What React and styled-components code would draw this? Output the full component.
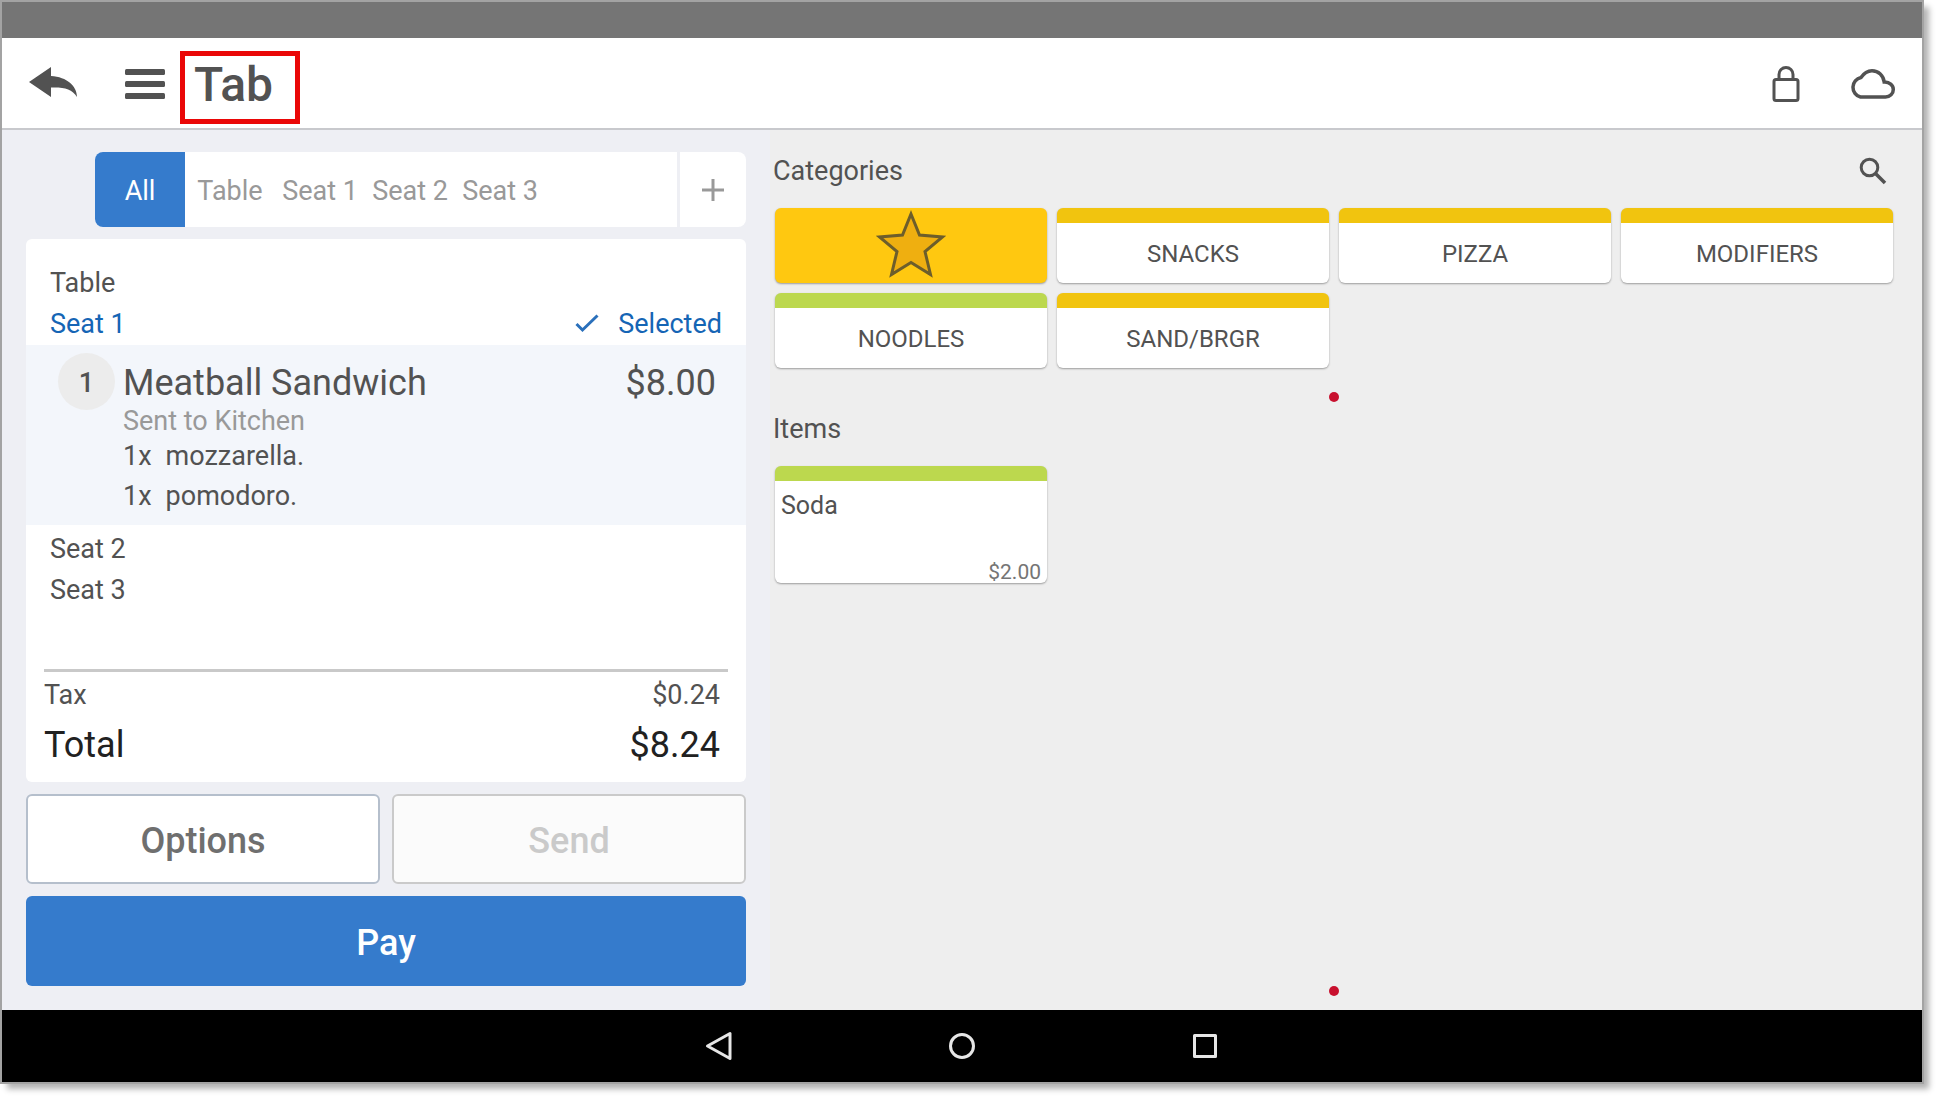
import React, { useState } from "react";
import styled, { createGlobalStyle } from "styled-components";

const GlobalStyle = createGlobalStyle`
  * {
    box-sizing: border-box;
  }

  body {
    margin: 0;
    background: #fff;
    color: #525252;
    font-family: Roboto, "Liberation Sans", sans-serif;
    font-size: 27px;
  }

  button {
    border: none;
    padding: 0;
    background: none;
    color: inherit;
    font: inherit;
    cursor: pointer;
  }

  h1, h2, p, ul, dl, dd {
    margin: 0;
    padding: 0;
    font-weight: 400;
    list-style: none;
  }

  svg {
    display: block;
  }
`;

const Device = styled.div`
  display: flex;
  flex-direction: column;
  min-height: calc(100vh - 15px);
  margin: 0 15px 15px 0;
  border: 2px solid #a3a3a3;
  box-shadow: 6px 6px 6px -1px rgba(0, 0, 0, .3);
`;

const StatusBar = styled.div`
  height: 36px;
  background: #757575;
`;

const Header = styled.header`
  display: flex;
  align-items: center;
  height: 92px;
  padding: 2px 26px 0 25px;
  border-bottom: 2px solid #c8c9cd;
  background: #fff;
`;

const IconButton = styled.button`
  display: flex;
  align-items: center;
  justify-content: center;
  margin-right: ${({ $after }) => $after || 0}px;
`;

const Title = styled.h1`
  margin-top: 6px;
  padding: 0 22px 5px 9px;
  border: 5px solid #ea0707;
  font-size: 48px;
  font-weight: 500;
  line-height: 58px;
`;

const HeaderActions = styled.div`
  display: flex;
  align-items: center;
  gap: 46px;
  margin-left: auto;
`;

const Main = styled.main`
  display: grid;
  grid-template-columns: 2fr 3fr;
  flex: 1;
`;

const OrderPane = styled.section`
  display: flex;
  flex-direction: column;
  gap: 12px;
  padding: 22px 24px 24px;
  background: #eeeff4;
`;

const SeatBar = styled.div`
  display: flex;
  height: 75px;
  margin-left: 69px;
  border-radius: 8px;
  overflow: hidden;
`;

const SeatTabs = styled.div`
  display: flex;
  flex: 1;
  background: #fff;
`;

const SeatTab = styled.button`
  width: 90px;
  padding-top: 2px;
  background: ${({ $active }) => ($active ? "#357bcc" : "#fff")};
  color: ${({ $active }) => ($active ? "#fff" : "#999")};
`;

const AddSeat = styled.button`
  display: flex;
  align-items: center;
  justify-content: center;
  width: 66px;
  margin-left: 3px;
  background: #fff;
`;

const Ticket = styled.div`
  display: flex;
  flex-direction: column;
  flex: 1;
  padding: 24px 0 10px;
  border-radius: 6px;
  background: #fff;
`;

const SeatLine = styled.div`
  display: flex;
  align-items: center;
  justify-content: space-between;
  padding: 0 24px;
  line-height: 41px;
  color: ${({ $selected }) => ($selected ? "#1565b5" : "inherit")};
`;

const Selected = styled.span`
  display: flex;
  align-items: center;
  gap: 19px;
`;

const OrderItem = styled.div`
  display: flex;
  align-items: flex-start;
  margin-bottom: 4px;
  padding: 8px 30px 9px 32px;
  background: #f3f6fb;
`;

const Quantity = styled.span`
  flex-shrink: 0;
  width: 57px;
  margin-right: 8px;
  padding-top: 3px;
  border-radius: 50%;
  background: #ececec;
  font-weight: 500;
  line-height: 54px;
  text-align: center;
`;

const ItemDetails = styled.div`
  flex: 1;
  padding-top: 7px;
`;

const ItemHead = styled.div`
  display: flex;
  justify-content: space-between;
  font-size: 36px;
  line-height: 46px;
`;

const ItemStatus = styled.p`
  color: #999;
  line-height: 30px;
`;

const Modifier = styled.li`
  display: flex;
  gap: 14px;
  line-height: 40px;
`;

const Totals = styled.dl`
  margin: auto 18px 0;
  border-top: 3px solid #c9c9c9;
`;

const TotalLine = styled.div`
  display: flex;
  justify-content: space-between;
  padding-right: 8px;
  font-size: ${({ $grand }) => ($grand ? 36 : 27)}px;
  line-height: ${({ $grand }) => ($grand ? 54 : 46)}px;
  color: ${({ $grand }) => ($grand ? "#212121" : "inherit")};
`;

const ActionRow = styled.div`
  display: grid;
  grid-template-columns: 1fr 1fr;
  gap: 12px;
`;

const ActionButton = styled.button`
  height: 90px;
  padding-top: 4px;
  border: 2px solid #b5bfcc;
  border-radius: 6px;
  background: #fff;
  color: #6f6f6f;
  font-size: 36px;
  font-weight: 500;

  &:disabled {
    border-color: #cacaca;
    background: #fbfbfb;
    color: #cacaca;
    cursor: default;
  }
`;

const PayButton = styled(ActionButton)`
  border: none;
  background: #357bcc;
  color: #fff;
`;

const MenuPane = styled.section`
  display: flex;
  flex-direction: column;
  padding: 0 29px 14px 3px;
  background: #eee;
`;

const PaneHeading = styled.div`
  display: flex;
  align-items: center;
  justify-content: space-between;
  height: 78px;
  padding: 3px 6px 0 0;
`;

const ItemsHeading = styled.h2`
  padding-bottom: 10px;
  font-size: 27px;
  line-height: 54px;
`;

const PaneTitle = styled.h2`
  font-size: 27px;
`;

const TileGrid = styled.div`
  display: grid;
  grid-template-columns: repeat(4, 1fr);
  gap: 10px;
  margin-left: 2px;
`;

const Tile = styled.button`
  height: 75px;
  padding-top: 2px;
  border-top: 15px solid ${({ $color }) => $color};
  border-radius: 6px;
  background: #fff;
  box-shadow: 0 1px 2px rgba(0, 0, 0, .35);
  font-size: 24px;
`;

const FavoritesTile = styled(Tile)`
  display: flex;
  justify-content: center;
  padding-top: 0;
  border-top: none;
  background: #ffc810;
`;

const ItemTile = styled(Tile)`
  display: flex;
  flex-direction: column;
  align-items: flex-start;
  justify-content: space-between;
  height: 117px;
  padding: 9px 6px 0;
  font-size: 25px;
  line-height: 32px;
`;

const Price = styled.span`
  align-self: flex-end;
  color: #757575;
  font-size: 21px;
  line-height: 22px;
`;

const PageDot = styled.span`
  align-self: center;
  width: 10px;
  height: 10px;
  margin-top: ${({ $bottom }) => ($bottom ? "auto" : "24px")};
  margin-left: 2px;
  border-radius: 50%;
  background: #c8102e;
`;

const NavBar = styled.nav`
  display: flex;
  align-items: center;
  justify-content: center;
  gap: 213px;
  height: 72px;
  background: #000;
`;

const BackIcon = () => (
  <svg width="52" height="34" viewBox="0 2 52 34" fill="#525252">
    <path d="M2 17 24 2v9c16 1 26 10 26 21-5-8-13-10-26-9.500V32Z" />
  </svg>
);

const MenuIcon = () => (
  <svg width="40" height="30" viewBox="0 0 40 30" fill="#525252">
    <rect width="40" height="6" rx="1.500" />
    <rect y="12" width="40" height="6" rx="1.500" />
    <rect y="24" width="40" height="6" rx="1.500" />
  </svg>
);

const LockIcon = () => (
  <svg width="32" height="38" viewBox="0 0 32 38" fill="none" stroke="#525252" strokeWidth="3">
    <rect x="4" y="14.500" width="24" height="21" rx="2" />
    <path d="M9 14V9.500a7 7 0 0 1 14 0V14" />
  </svg>
);

const CloudIcon = () => (
  <svg width="48" height="32" viewBox="0 0 48 32" fill="none" stroke="#525252" strokeWidth="3.500">
    <path d="M12.500 29A10 10 0 0 1 13 9.500C16 5 20 2.700 24 2.700 30.500 2.700 35.500 7.500 36.200 14 41.500 13.700 45.300 17.300 45.300 21.500 45.300 25.700 42 29 37.500 29Z" />
  </svg>
);

const SearchIcon = () => (
  <svg width="28" height="28" viewBox="0 0 28 28" fill="none" stroke="#525252" strokeWidth="3">
    <circle cx="10.500" cy="10.500" r="8.300" />
    <path d="m16.500 16.500 9.500 9.500" strokeWidth="3.500" />
  </svg>
);

const PlusIcon = () => (
  <svg width="22" height="22" viewBox="0 0 22 22" stroke="#999" strokeWidth="3">
    <path d="M0 11h22M11 0v22" />
  </svg>
);

const CheckIcon = () => (
  <svg width="24" height="22" viewBox="0 0 24 22" fill="none" stroke="#2a70bb" strokeWidth="3">
    <path d="m1.500 10 6 6L22.500 1.500" />
  </svg>
);

const StarIcon = () => (
  <svg width="72" height="72" viewBox="0 0 72 72" fill="#efaf10" stroke="#6d5e2b" strokeWidth="3">
    <path d="m36 6 8.500 21L67.500 29 50 43.500 55.500 66.500 36 54.500 16.500 66.500 22 43.500 4.500 29 27.500 27Z" />
  </svg>
);

const NavIcon = ({ children }) => (
  <svg width="30" height="30" viewBox="0 0 30 30" fill="none" stroke="#e6e6e6" strokeWidth="3" strokeLinejoin="round">
    {children}
  </svg>
);

const seats = ["All", "Table", "Seat 1", "Seat 2", "Seat 3"];

const categories = [
  { name: "SNACKS", color: "#f1c40f" },
  { name: "PIZZA", color: "#f1c40f" },
  { name: "MODIFIERS", color: "#f1c40f" },
  { name: "NOODLES", color: "#bcd84e" },
  { name: "SAND/BRGR", color: "#f1c40f" },
];

const modifiers = ["mozzarella.", "pomodoro."];

const Order = () => {
  const [activeSeat, setActiveSeat] = useState("All");

  return (
    <OrderPane>
      <SeatBar>
        <SeatTabs>
          {seats.map((seat) => (
            <SeatTab key={seat} $active={seat === activeSeat} onClick={() => setActiveSeat(seat)}>
              {seat}
            </SeatTab>
          ))}
        </SeatTabs>
        <AddSeat aria-label="Add seat"><PlusIcon /></AddSeat>
      </SeatBar>

      <Ticket>
        <SeatLine>Table</SeatLine>
        <SeatLine $selected>
          Seat 1
          <Selected><CheckIcon />Selected</Selected>
        </SeatLine>
        <OrderItem>
          <Quantity>1</Quantity>
          <ItemDetails>
            <ItemHead>
              <span>Meatball Sandwich</span>
              <span>$8.00</span>
            </ItemHead>
            <ItemStatus>Sent to Kitchen</ItemStatus>
            <ul>
              {modifiers.map((name) => (
                <Modifier key={name}><span>1x</span><span>{name}</span></Modifier>
              ))}
            </ul>
          </ItemDetails>
        </OrderItem>
        <SeatLine>Seat 2</SeatLine>
        <SeatLine>Seat 3</SeatLine>

        <Totals>
          <TotalLine><dt>Tax</dt><dd>$0.24</dd></TotalLine>
          <TotalLine $grand><dt>Total</dt><dd>$8.24</dd></TotalLine>
        </Totals>
      </Ticket>

      <ActionRow>
        <ActionButton>Options</ActionButton>
        <ActionButton disabled>Send</ActionButton>
      </ActionRow>
      <PayButton>Pay</PayButton>
    </OrderPane>
  );
};

const Menu = () => (
  <MenuPane>
    <PaneHeading>
      <PaneTitle>Categories</PaneTitle>
      <IconButton aria-label="Search"><SearchIcon /></IconButton>
    </PaneHeading>
    <TileGrid>
      <FavoritesTile aria-label="Favorites"><StarIcon /></FavoritesTile>
      {categories.map(({ name, color }) => (
        <Tile key={name} $color={color}>{name}</Tile>
      ))}
    </TileGrid>
    <PageDot />

    <ItemsHeading>Items</ItemsHeading>
    <TileGrid>
      <ItemTile $color="#bcd84e">
        <span>Soda</span>
        <Price>$2.00</Price>
      </ItemTile>
    </TileGrid>
    <PageDot $bottom />
  </MenuPane>
);

const App = () => (
  <>
    <GlobalStyle />
    <Device>
      <StatusBar />
      <Header>
        <IconButton aria-label="Back" $after={46}><BackIcon /></IconButton>
        <IconButton aria-label="Menu" $after={15}><MenuIcon /></IconButton>
        <Title>Tab</Title>
        <HeaderActions>
          <IconButton aria-label="Lock"><LockIcon /></IconButton>
          <IconButton aria-label="Cloud"><CloudIcon /></IconButton>
        </HeaderActions>
      </Header>
      <Main>
        <Order />
        <Menu />
      </Main>
      <NavBar>
        <IconButton aria-label="Back"><NavIcon><path d="M26 2.500v25L3.500 15Z" /></NavIcon></IconButton>
        <IconButton aria-label="Home"><NavIcon><circle cx="15" cy="15" r="11.500" /></NavIcon></IconButton>
        <IconButton aria-label="Recent apps"><NavIcon><rect x="4.500" y="4.500" width="21" height="21" /></NavIcon></IconButton>
      </NavBar>
    </Device>
  </>
);

export default App;
